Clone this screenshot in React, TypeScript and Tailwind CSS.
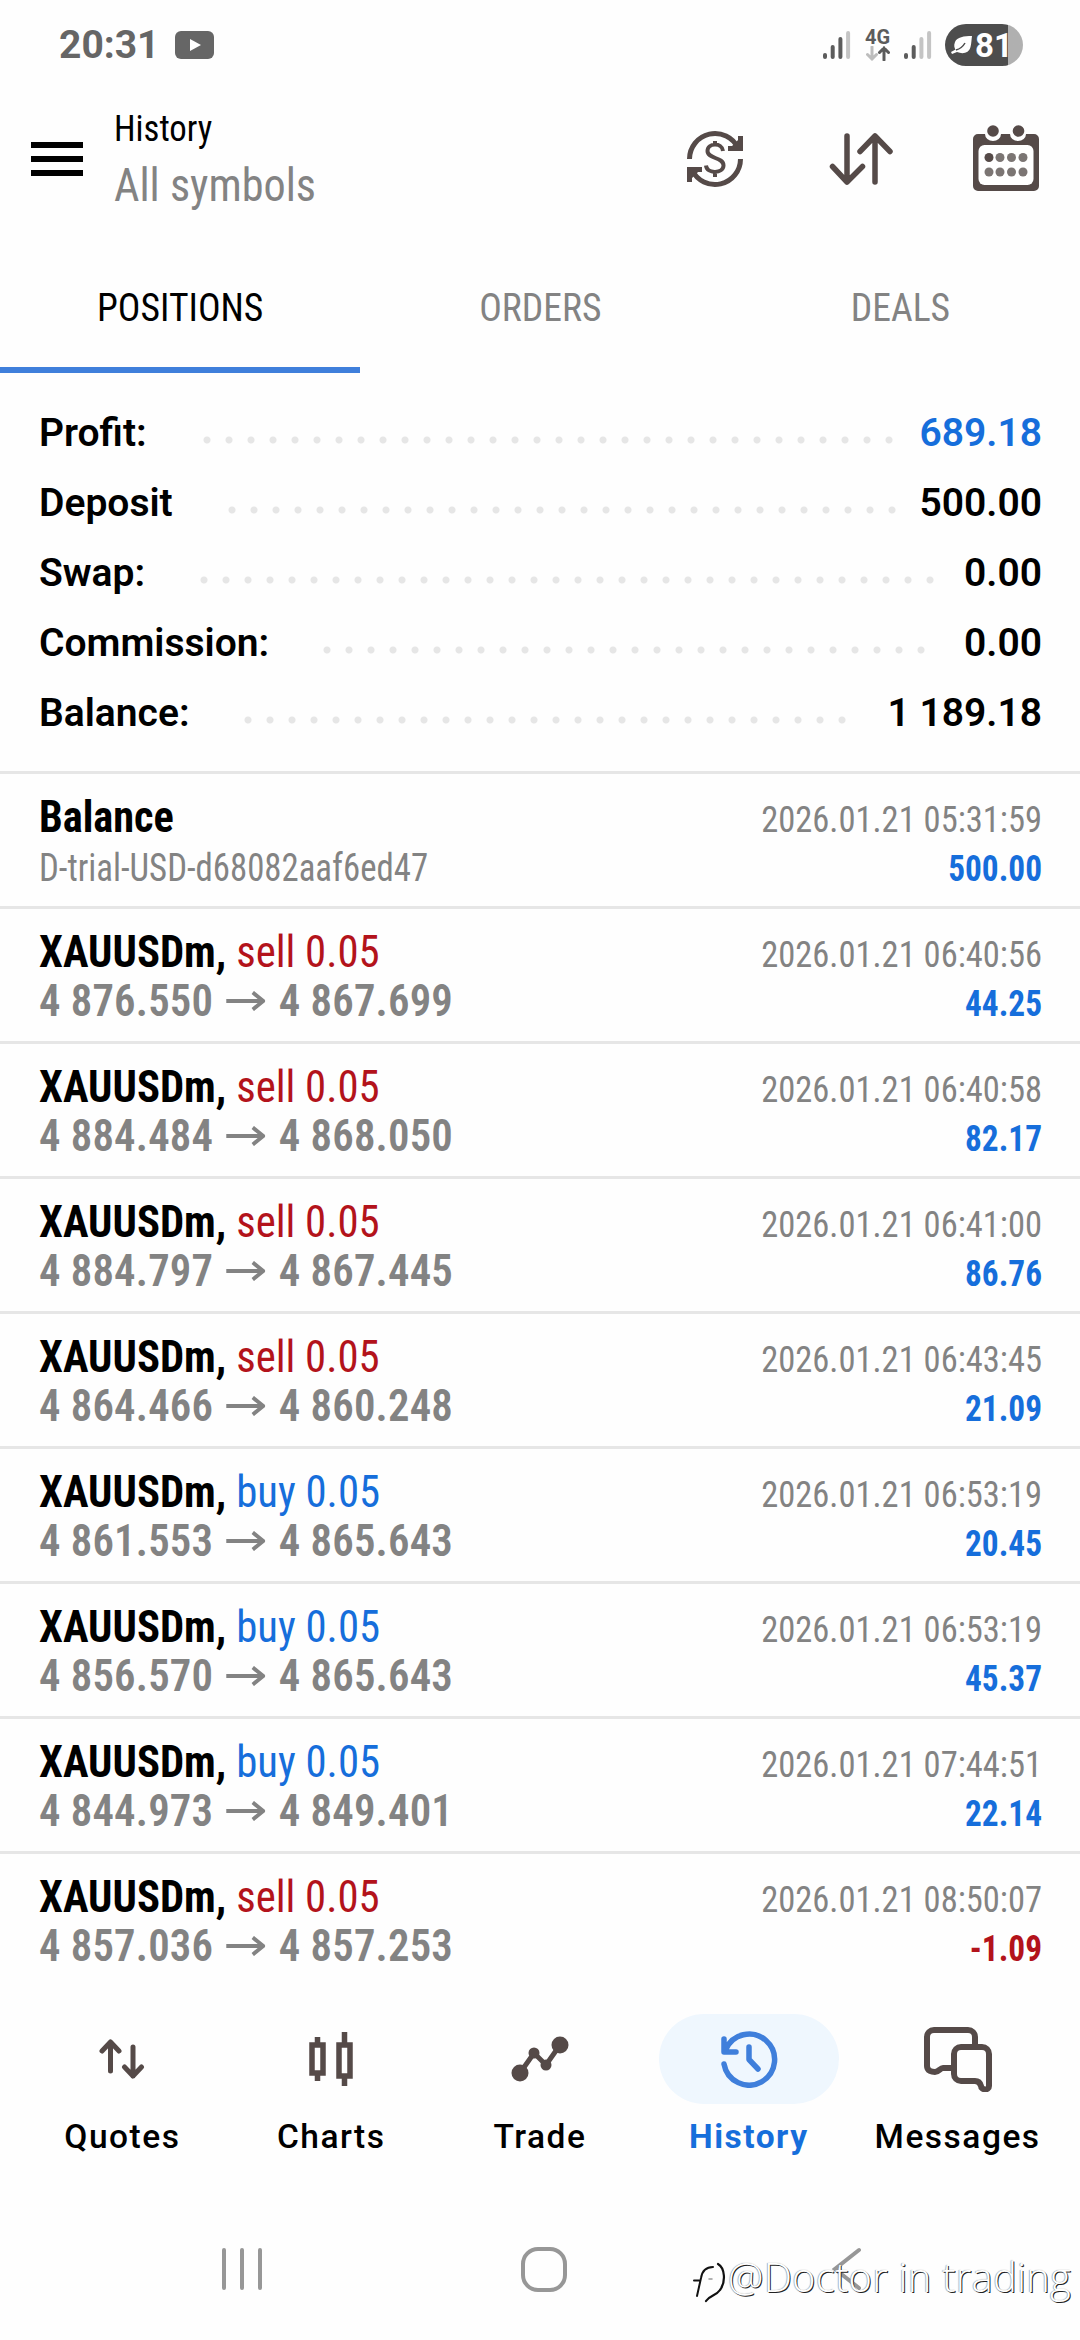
import React from 'react';

interface Summary {
  label: string;
  value: string;
  labelWidth: string;
  dots: number;
  blue?: boolean;
}

interface Deal {
  side: 'buy' | 'sell';
  from: string;
  to: string;
  date: string;
  profit: string;
}

const summary: Summary[] = [
  { label: 'Profit:', value: '689.18', labelWidth: 'w-[157px]', dots: 32, blue: true },
  { label: 'Deposit', value: '500.00', labelWidth: 'w-[182px]', dots: 31 },
  { label: 'Swap:', value: '0.00', labelWidth: 'w-[154px]', dots: 34 },
  { label: 'Commission:', value: '0.00', labelWidth: 'w-[277px]', dots: 28 },
  { label: 'Balance:', value: '1 189.18', labelWidth: 'w-[198px]', dots: 28 },
];

const deals: Deal[] = [
  { side: 'sell', from: '4 876.550', to: '4 867.699', date: '2026.01.21 06:40:56', profit: '44.25' },
  { side: 'sell', from: '4 884.484', to: '4 868.050', date: '2026.01.21 06:40:58', profit: '82.17' },
  { side: 'sell', from: '4 884.797', to: '4 867.445', date: '2026.01.21 06:41:00', profit: '86.76' },
  { side: 'sell', from: '4 864.466', to: '4 860.248', date: '2026.01.21 06:43:45', profit: '21.09' },
  { side: 'buy', from: '4 861.553', to: '4 865.643', date: '2026.01.21 06:53:19', profit: '20.45' },
  { side: 'buy', from: '4 856.570', to: '4 865.643', date: '2026.01.21 06:53:19', profit: '45.37' },
  { side: 'buy', from: '4 844.973', to: '4 849.401', date: '2026.01.21 07:44:51', profit: '22.14' },
  { side: 'sell', from: '4 857.036', to: '4 857.253', date: '2026.01.21 08:50:07', profit: '-1.09' },
];

const SignalBars = ({ active }: { active: number }) => (
  <svg width="28" height="30" viewBox="0 0 28 30" strokeWidth="4" strokeLinecap="round">
    {[25, 17, 9, 3].map((y, i) => (
      <path key={y} d={`M${2 + i * 7.7} ${y}V27`} stroke={i < active ? '#5c5c5c' : '#c4c4c4'} />
    ))}
  </svg>
);

const StatusBar = () => (
  <div className="flex h-[89px] items-center pt-px pr-[57px] pl-[59px]">
    <span className="w-[116px] text-[39px] leading-none font-bold text-[#666]">20:31</span>
    <svg width="39" height="28" viewBox="0 0 39 28">
      <rect width="39" height="28" rx="6" fill="#666" />
      <path d="M15 8v12l11-6z" fill="#fff" />
    </svg>
    <div className="ml-auto flex items-center">
      <SignalBars active={3} />
      <div className="mx-[13px] flex w-[27px] flex-col items-center">
        <span className="text-[20px] leading-[17px] font-bold text-[#5c5c5c]">4G</span>
        <svg width="24" height="15" viewBox="0 0 24 15" fill="none" strokeWidth="3" strokeLinecap="round">
          <path d="M6 1v12M1.5 8.5 6 13l4.500-4.500" stroke="#bdbdbd" />
          <path d="M18 14V2M13.500 6.500 18 2l4.500 4.500" stroke="#5c5c5c" />
        </svg>
      </div>
      <SignalBars active={2} />
      <div className="ml-[13px] flex h-[42px] w-[78px] items-center overflow-hidden rounded-full bg-linear-to-r from-[#4d4d4d] from-[63px] to-[#b0b0b0] to-[63px] pl-[6px]">
        <svg width="22" height="20" viewBox="0 0 22 20">
          <path d="M21 1C13 1 6 2 4 7c-1.500 3.500-.5 6 .5 7.500L0 17l1 2 5-2c6 2.500 12 1 13.500-5C20.500 8.500 20.500 4 21 1z" fill="#fff" />
          <path d="M5 15c4-1 7-3.500 9-7" stroke="#4d4d4d" strokeWidth="1.500" fill="none" />
        </svg>
        <span className="ml-[2px] text-[33px] leading-none font-bold text-white">81</span>
      </div>
    </div>
  </div>
);

const Header = () => (
  <header className="flex h-[140px] items-center pr-[41px] pl-[31px]">
    <div className="flex w-[52px] flex-col gap-[8px]">
      <span className="h-[6px] bg-black" />
      <span className="h-[6px] bg-black" />
      <span className="h-[6px] bg-black" />
    </div>
    <div className="ml-[31px] origin-left scale-x-[0.94] font-stretch-[75%]">
      <h1 className="text-[37px] leading-[52px] text-black">History</h1>
      <p className="text-[47px] leading-[60px] text-[#838383]">All symbols</p>
    </div>
    <div className="ml-auto flex items-center text-[#554a48]">
      <svg width="58" height="58" viewBox="0 0 58 58" fill="none" stroke="currentColor" strokeWidth="5">
        <path d="M3.500 29A25.500 25.500 0 0 1 52 18M54.500 29A25.500 25.500 0 0 1 6 40" />
        <path d="M54.500 6v12.500H42M3.500 52V39.500H16" />
        <path d="M54 8v11H43zM4 50V39h11z" fill="currentColor" stroke="none" />
        <path d="M37 21c-1-9-15.500-8-15.500 0 0 8 16 6 16 14.500 0 8-16.500 9-17.500 0M29 11v5M29 42v5" strokeWidth="4" />
      </svg>
      <svg className="ml-[85px]" width="64" height="54" viewBox="0 0 64 54" fill="none" stroke="currentColor" strokeWidth="5.500" strokeLinecap="round" strokeLinejoin="round">
        <path d="M18 4v46M3.500 34.500 18 50l15.500-15.500M46 50V4M31 19.500 46 4l15 15.500" />
      </svg>
      <svg className="mb-[3px] ml-[80px]" width="66" height="66" viewBox="0 0 66 66">
        <path d="M5 9h7a8 7 0 0 0 16 0h9a8 7 0 0 0 16 0h8a5 5 0 0 1 5 5v47a5 5 0 0 1-5 5H5a5 5 0 0 1-5-5V14a5 5 0 0 1 5-5z" fill="currentColor" />
        <rect x="5.500" y="20" width="55" height="40" rx="6" fill="#fff" />
        <circle cx="20" cy="6" r="5.800" fill="currentColor" />
        <circle cx="45.500" cy="6" r="5.800" fill="currentColor" />
        {[16, 27, 38.5, 50].map((x) => (
          <React.Fragment key={x}>
            <circle cx={x} cy="32.500" r="4.500" fill={x === 16 ? '#554a48' : '#7b7573'} />
            <circle cx={x} cy="47" r="4.500" fill="#7b7573" />
          </React.Fragment>
        ))}
      </svg>
    </div>
  </header>
);

const Tabs = () => (
  <nav className="grid h-[144px] grid-cols-3 grid-rows-[144px] text-center text-[39px] leading-[158px] text-[#838383] font-stretch-[75%]">
    <div className="border-b-[6px] border-[#3f7fdb] text-black">
      <span className="inline-block scale-x-[0.965]">POSITIONS</span>
    </div>
    <div>
      <span className="inline-block scale-x-[0.965]">ORDERS</span>
    </div>
    <div>
      <span className="inline-block scale-x-[0.965]">DEALS</span>
    </div>
  </nav>
);

const SummaryRow = ({ row }: { row: Summary }) => (
  <div className="flex h-[70px] items-center text-[39px] leading-none font-semibold text-black">
    <span className={`shrink-0 whitespace-nowrap ${row.labelWidth}`}>{row.label}</span>
    <div
      className="mt-[13px] h-[22px] bg-[radial-gradient(circle,#e6e6e6_3px,transparent_4px)] bg-[length:22px_22px]"
      style={{ width: row.dots * 22 }}
    />
    <span className={`ml-auto whitespace-nowrap ${row.blue ? 'text-[#166edb]' : ''}`}>{row.value}</span>
  </div>
);

const Arrow = () => (
  <svg className="mx-[14px]" width="41" height="20" viewBox="0 0 41 20" fill="none" stroke="currentColor" strokeWidth="4">
    <path d="M0 10h39M28 1.500 39 10l-11 8.500" />
  </svg>
);

const DealRow = ({ deal }: { deal: Deal }) => (
  <li className="flex h-[135px] justify-between border-t-[3px] border-[#e6e6e6] pt-[19px] pr-[38px] pl-[39px] font-stretch-[75%]">
    <div className="origin-left scale-x-[0.95]">
      <p className="text-[45px] leading-[48px] font-bold text-black">
        XAUUSDm,{' '}
        <span className={`font-normal ${deal.side === 'sell' ? 'text-[#b3131b]' : 'text-[#166edb]'}`}>{deal.side} 0.05</span>
      </p>
      <p className="flex items-center text-[45px] leading-[49px] font-semibold tracking-[0.2px] text-[#838383]">
        {deal.from}
        <Arrow />
        {deal.to}
      </p>
    </div>
    <div className="text-right">
      <p className="origin-right scale-x-[0.933] text-[37px] leading-[54px] text-[#838383]">{deal.date}</p>
      <p className={`origin-right scale-x-[0.9] text-[37px] leading-[44px] font-bold ${deal.profit.startsWith('-') ? 'text-[#b3131b]' : 'text-[#166edb]'}`}>{deal.profit}</p>
    </div>
  </li>
);

const NavItem = ({ label, active, children }: { label: string; active?: boolean; children: React.ReactNode }) => (
  <div className="flex flex-col items-center">
    <div className={`flex h-[90px] w-[180px] items-center justify-center rounded-full ${active ? 'bg-[#eff7fe] text-[#3f7fdb]' : 'text-[#554a48]'}`}>
      {children}
    </div>
    <span className={`mt-[13px] text-[33.5px] leading-[40px] tracking-[1.5px] ${active ? 'font-bold text-[#166edb]' : 'font-medium text-black'}`}>{label}</span>
  </div>
);

const BottomNav = () => (
  <nav className="grid grid-cols-5 px-[18px] pt-[27px]">
    <NavItem label="Quotes">
      <svg width="46" height="40" viewBox="0 0 46 40" fill="none" stroke="currentColor" strokeWidth="5" strokeLinecap="round" strokeLinejoin="round">
        <path d="M11.500 32V3M3 12l8.500-9 8.500 9M34 8v29M25.500 28l8.500 9 8.500-9" />
      </svg>
    </NavItem>
    <NavItem label="Charts">
      <svg width="44" height="56" viewBox="0 0 44 56" fill="none" stroke="currentColor" strokeWidth="5.500">
        <path d="M3 14h11v28H3zM8.500 14V6M8.500 42v8M30 14h11v31H30zM35.500 14V1M35.500 45v10" />
      </svg>
    </NavItem>
    <NavItem label="Trade">
      <svg width="58" height="46" viewBox="0 0 58 46" fill="none" stroke="currentColor" strokeWidth="5">
        <path d="M9 37 23 17l12 12L49 9" />
        <g fill="currentColor" stroke="none">
          <circle cx="9" cy="37" r="8.500" />
          <circle cx="23" cy="17" r="5.500" />
          <circle cx="35" cy="29" r="5.500" />
          <circle cx="49" cy="9" r="8.500" />
        </g>
      </svg>
    </NavItem>
    <NavItem label="History" active>
      <svg width="58" height="58" viewBox="0 0 58 58" fill="none" stroke="currentColor" strokeWidth="5.500" strokeLinecap="round" strokeLinejoin="round">
        <path d="M4 34A25.500 25.500 0 1 0 5.500 20M4 9v13h12M29 17v12.500L38 39" />
      </svg>
    </NavItem>
    <NavItem label="Messages">
      <svg width="70" height="66" viewBox="0 0 70 66" fill="none" stroke="currentColor" strokeWidth="6" strokeLinejoin="round" strokeLinecap="round">
        <path d="M29 42H20c-3 0-4 4-8 4-3 0-8-1-8-6V11c0-4 3-7 7-7h34c4 0 7 3 7 7v9" />
        <path d="M38 21h21c4 0 7 3 7 7v32c0 5-8 4-8 0-1-4-3-5-6-5H38c-4 0-7-3-7-7V28c0-4 3-7 7-7z" />
      </svg>
    </NavItem>
  </nav>
);

const SystemNav = () => (
  <div className="flex h-[44px] items-center pl-[222px] text-[#979797]">
    <svg width="40" height="44" viewBox="0 0 40 44" stroke="currentColor" strokeWidth="4" strokeLinecap="round">
      <path d="M2 3v38M20 3v38M38 3v38" />
    </svg>
    <div className="ml-[259px] h-[45px] w-[46px] rounded-[17px] border-[4px] border-current" />
    <svg className="ml-[265px]" width="30" height="44" viewBox="0 0 30 44" fill="none" stroke="currentColor" strokeWidth="4" strokeLinecap="round">
      <path d="M27 3 3 22l24 19" />
    </svg>
  </div>
);

const Watermark = () => (
  <div className="absolute top-[2247px] left-[692px] flex items-start text-white">
    <svg width="36" height="58" viewBox="0 0 36 58" fill="none" stroke="#111" strokeWidth="2" strokeLinecap="round">
      <path d="M2 33.500h5M5 49l4-18c1-6 4-11 12-11" />
      <path d="M26 17c7 4 8 18 2 26-4 6-10 5-14 11" strokeWidth="2.200" />
      <path d="M17 32h3" stroke="#999" strokeWidth="1.500" />
    </svg>
    <span className="font-['Open_Sans',sans-serif] text-[40px] leading-[60px] font-light tracking-[0.2px] whitespace-nowrap [text-shadow:1px_1px_0_#222,-0.5px_-0.5px_1px_#888]">
      @Doctor in trading
    </span>
  </div>
);

const App = () => (
  <div className="relative flex h-[2340px] w-[1080px] flex-col overflow-hidden bg-[#fefefe] font-['Roboto',sans-serif]">
    <StatusBar />
    <Header />
    <Tabs />
    <section className="h-[398px] pt-[25px] pr-[38px] pl-[39px]">
      {summary.map((row) => (
        <SummaryRow key={row.label} row={row} />
      ))}
    </section>
    <ul className="h-[1216px] overflow-hidden">
      <li className="flex h-[135px] justify-between border-t-[3px] border-[#e6e6e6] pt-[19px] pr-[38px] pl-[39px] font-stretch-[75%]">
        <div>
          <p className="origin-left scale-x-[0.94] text-[45px] leading-[48px] font-bold text-black">Balance</p>
          <p className="origin-left scale-x-[0.915] text-[38px] leading-[54px] text-[#838383]">D-trial-USD-d68082aaf6ed47</p>
        </div>
        <div className="text-right">
          <p className="origin-right scale-x-[0.933] text-[37px] leading-[54px] text-[#838383]">2026.01.21 05:31:59</p>
          <p className="origin-right scale-x-[0.9] text-[37px] leading-[44px] font-bold text-[#166edb]">500.00</p>
        </div>
      </li>
      {deals.map((deal) => (
        <DealRow key={deal.from} deal={deal} />
      ))}
    </ul>
    <BottomNav />
    <div className="mt-[90px]">
      <SystemNav />
    </div>
    <Watermark />
  </div>
);

export default App;
